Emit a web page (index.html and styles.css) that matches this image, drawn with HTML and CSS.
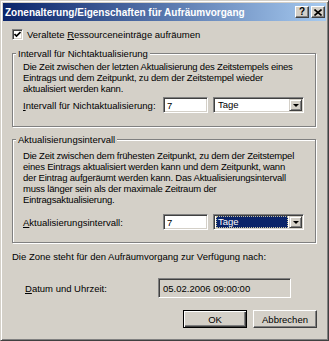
FILE: index.html
```html
<!DOCTYPE html>
<html lang="de">
<head>
<meta charset="utf-8">
<title>Zonenalterung/Eigenschaften für Aufräumvorgang</title>
<link rel="stylesheet" href="styles.css">
</head>
<body>
<div class="window">
  <div class="titlebar">
    <span class="title">Zonenalterung/Eigenschaften für Aufräumvorgang</span>
    <div class="tbtns">
      <span class="tbtn help">?</span>
      <span class="tbtn close"><svg width="8" height="7" viewBox="0 0 8 7"><path d="M0.5 0.5 L7.5 6.5 M7.5 0.5 L0.5 6.5" stroke="#000" stroke-width="1.6" fill="none"/></svg></span>
    </div>
  </div>
  <div class="content">
    <div class="check">
      <span class="cbox"><svg width="7" height="7" viewBox="0 0 7 7"><path d="M0.5 3 L2.5 5 L6.5 1" stroke="#000" stroke-width="1.7" fill="none"/></svg></span>
      <span>Veraltete <u>R</u>essourceneinträge aufräumen</span>
    </div>

    <fieldset class="group g1">
      <legend>Intervall für Nichtaktualisierung</legend>
      <p class="desc">Die Zeit zwischen der letzten Aktualisierung des Zeitstempels eines<br>Eintrags und dem Zeitpunkt, zu dem der Zeitstempel wieder<br>aktualisiert werden kann.</p>
      <div class="row r1">
        <span class="lbl"><u>I</u>ntervall für Nichtaktualisierung:</span>
        <span class="field edit">7</span>
        <span class="field combo"><span class="val">Tage</span><span class="arrow"><span class="tri"></span></span></span>
      </div>
    </fieldset>

    <fieldset class="group g2">
      <legend>Aktualisierungsintervall</legend>
      <p class="desc">Die Zeit zwischen dem frühesten Zeitpunkt, zu dem der Zeitstempel<br>eines Eintrags aktualisiert werden kann und dem Zeitpunkt, wann<br>der Eintrag aufgeräumt werden kann. Das Aktualisierungsintervall<br>muss länger sein als der maximale Zeitraum der<br>Eintragsaktualisierung.</p>
      <div class="row r2">
        <span class="lbl"><u>A</u>ktualisierungsintervall:</span>
        <span class="field edit">7</span>
        <span class="field combo"><span class="val sel">Tage</span><span class="arrow"><span class="tri"></span></span></span>
      </div>
    </fieldset>

    <p class="zone">Die Zone steht für den Aufräumvorgang zur Verfügung nach:</p>

    <div class="daterow">
      <span class="dlbl"><u>D</u>atum und Uhrzeit:</span>
      <span class="field datebox">05.02.2006 09:00:00</span>
    </div>

    <div class="buttons">
      <span class="btn default">OK</span>
      <span class="btn">Abbrechen</span>
    </div>
  </div>
</div>
</body>
</html>
```
FILE: styles.css
```css
html, body {
  margin: 0;
  padding: 0;
  background: #d4d0c8;
}
body {
  font-family: "Liberation Sans", Arial, sans-serif;
  font-size: 9.5px;
  color: #000;
}
.window {
  width: 329px;
  height: 341px;
  box-sizing: border-box;
  border: 1px solid;
  border-color: #d4d0c8 #404040 #404040 #d4d0c8;
  box-shadow: inset 1px 1px 0 #fff, inset -1px -1px 0 #808080;
  padding: 2px;
  background: #d4d0c8;
  display: flex;
  flex-direction: column;
}
.titlebar {
  height: 18px;
  flex: none;
  background: linear-gradient(to right, #0a246a, #a6caf0);
  display: flex;
  align-items: center;
  padding: 0 1px 0 2px;
}
.title {
  flex: 1;
  color: #fff;
  font-weight: bold;
  font-size: 10px;
  white-space: nowrap;
}
.tbtns {
  display: flex;
  gap: 2px;
}
.tbtn {
  width: 14px;
  height: 12px;
  box-sizing: border-box;
  background: #d4d0c8;
  border: 1px solid;
  border-color: #fff #404040 #404040 #fff;
  box-shadow: inset -1px -1px 0 #808080;
  display: flex;
  align-items: center;
  justify-content: center;
}
.help {
  font-weight: bold;
  font-size: 10px;
  line-height: 10px;
}
.content {
  display: flex;
  flex-direction: column;
  padding: 8px 10px 0 9px;
}
.check {
  display: flex;
  align-items: center;
  height: 11px;
  gap: 4px;
  white-space: nowrap;
}
.cbox {
  width: 11px;
  height: 11px;
  box-sizing: border-box;
  background: #fff;
  border: 1px solid;
  border-color: #808080 #fff #fff #808080;
  box-shadow: inset 1px 1px 0 #404040, inset -1px -1px 0 #d4d0c8;
  display: flex;
  align-items: center;
  justify-content: center;
}
.group {
  margin: 8px 0 0 0;
  border: 1px solid #808080;
  box-shadow: inset 1px 1px 0 #fff, 1px 1px 0 #fff;
  padding: 2px 10px 13px 10px;
  min-width: 0;
}
.g2 {
  margin-top: 7px;
  padding-top: 5px;
  padding-bottom: 12px;
}
legend {
  padding: 0 2px;
  margin-left: -7px;
  line-height: 11px;
  background: #d4d0c8;
  white-space: nowrap;
}
.desc {
  margin: 0;
  line-height: 11px;
  white-space: nowrap;
  letter-spacing: -0.2px;
}
.row {
  display: flex;
  align-items: center;
  height: 16px;
  margin-top: 3px;
}
.r2 {
  margin-top: 9px;
}
.lbl {
  width: 140px;
  white-space: nowrap;
}
.field {
  box-sizing: border-box;
  height: 16px;
  border: 1px solid;
  border-color: #808080 #fff #fff #808080;
  box-shadow: inset 1px 1px 0 #404040, inset -1px -1px 0 #d4d0c8;
  background: #fff;
  display: flex;
  align-items: center;
  white-space: nowrap;
}
.edit {
  width: 45px;
  padding-left: 3px;
  margin-right: 5px;
}
.combo {
  width: 91px;
  padding: 1px 1px 1px 1px;
}
.val {
  flex: 1;
  height: 12px;
  line-height: 12px;
  padding-left: 2px;
  margin-left: 1px;
  margin-right: 1px;
}
.val.sel {
  background: #0a246a;
  color: #fff;
  outline: 1px dotted #c8c4a0;
  outline-offset: -1px;
}
.arrow {
  width: 13px;
  height: 12px;
  box-sizing: border-box;
  background: #d4d0c8;
  border: 1px solid;
  border-color: #d4d0c8 #404040 #404040 #d4d0c8;
  box-shadow: inset 1px 1px 0 #fff, inset -1px -1px 0 #808080;
  display: flex;
  align-items: center;
  justify-content: center;
}
.tri {
  width: 0;
  height: 0;
  border-left: 3px solid transparent;
  border-right: 3px solid transparent;
  border-top: 3px solid #000;
  margin-top: 1px;
}
.zone {
  margin: 8px 0 0 0;
  line-height: 11px;
  white-space: nowrap;
}
.daterow {
  display: flex;
  align-items: center;
  height: 20px;
  margin-top: 16px;
  padding-left: 13px;
}
.dlbl {
  width: 133px;
  white-space: nowrap;
}
.datebox {
  width: 133px;
  height: 20px;
  background: #d4d0c8;
  padding-left: 4px;
}
.buttons {
  display: flex;
  justify-content: flex-end;
  gap: 6px;
  margin-top: 12px;
  margin-right: -1px;
}
.btn {
  width: 64px;
  height: 18px;
  box-sizing: border-box;
  background: #d4d0c8;
  border: 1px solid;
  border-color: #fff #404040 #404040 #fff;
  box-shadow: inset -1px -1px 0 #808080;
  display: flex;
  align-items: center;
  justify-content: center;
}
.btn.default {
  border-color: #000;
  box-shadow: inset 1px 1px 0 #fff, inset -1px -1px 0 #404040, inset -2px -2px 0 #808080;
}
```
